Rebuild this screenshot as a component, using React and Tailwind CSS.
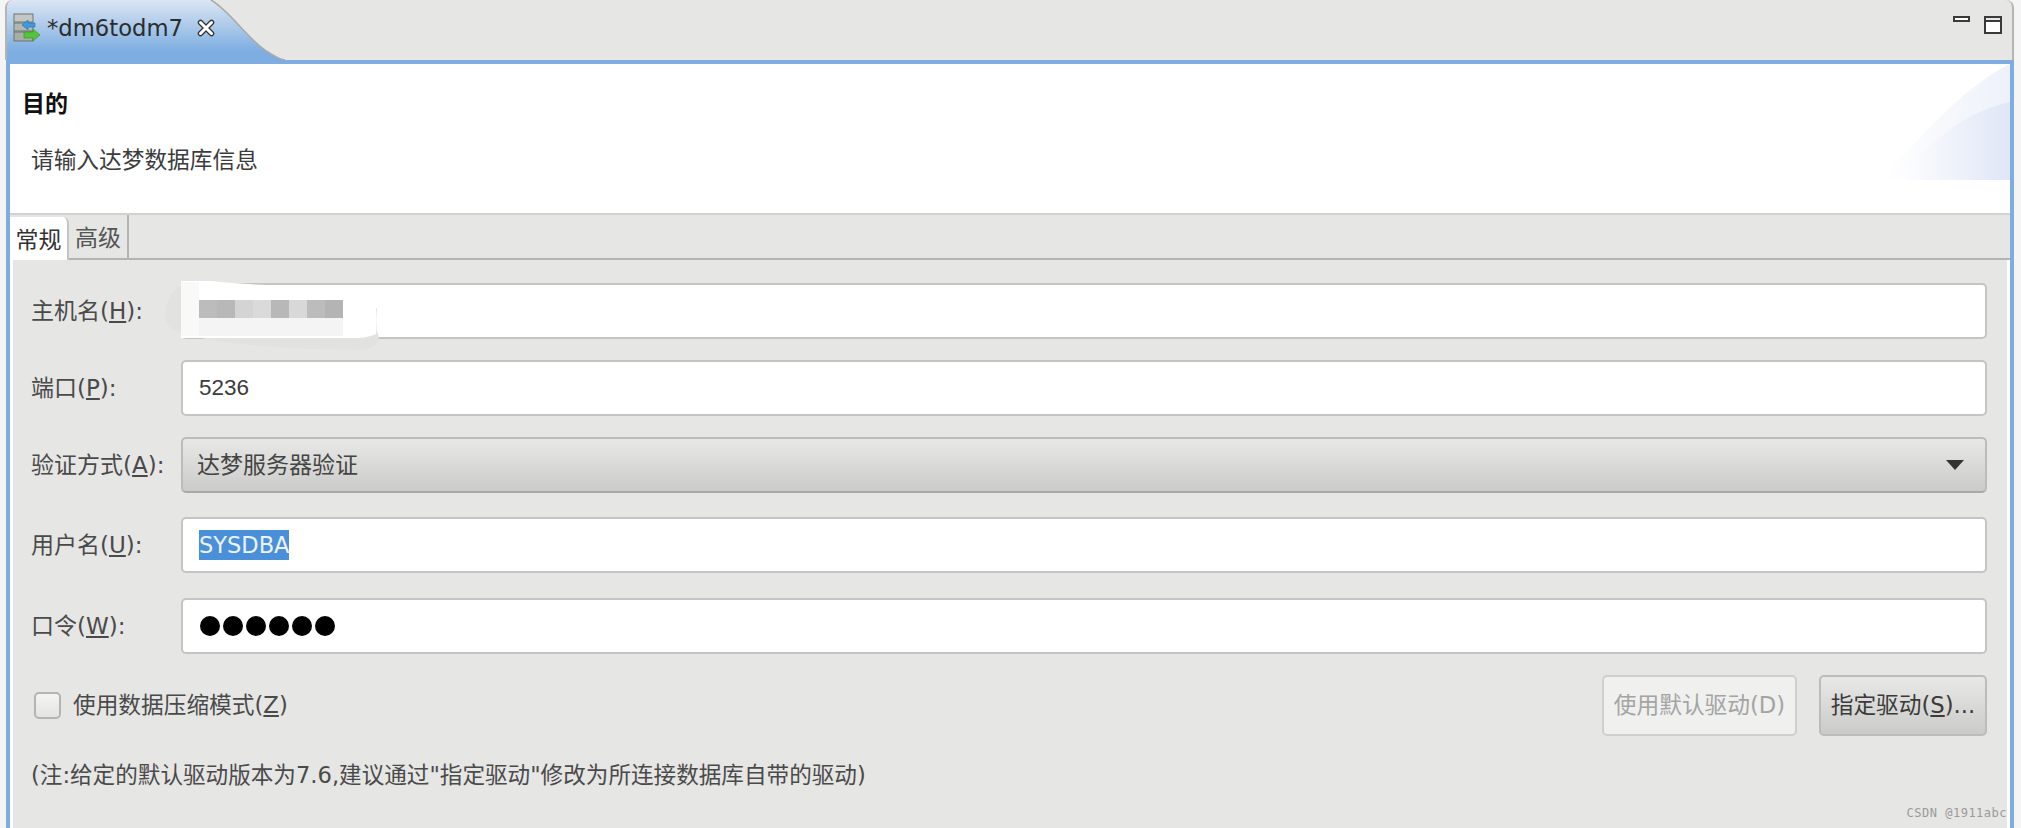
import React from "react";

const FONT = "font-['DejaVu_Sans','Noto_Sans_CJK_SC',sans-serif]";

// 带下划线的快捷键标签
const Mnemonic = ({ text, k, after = ":" }) => (
  <>
    {text}(<span className="underline underline-offset-2">{k}</span>){after}
  </>
);

const TabIcon = () => (
  <svg width="28" height="30" viewBox="0 0 28 30" className="shrink-0">
    <rect x="1" y="1" width="19" height="8" fill="#c4c8c4" stroke="#6e746e" />
    <rect x="1" y="10" width="19" height="8" fill="#b2b8b0" stroke="#6e746e" />
    <rect x="1" y="19" width="19" height="9" fill="#a8aea6" stroke="#6e746e" />
    <path d="M9 12l6-5v3h7v4h-7v3z" fill="#3f9be0" stroke="#2a6fb0" strokeWidth="0.6" />
    <path d="M27 22l-7-6v3h-9v6h9v3z" fill="#55c43c" stroke="#2f8e22" strokeWidth="0.6" />
  </svg>
);

const CloseIcon = () => (
  <svg width="18" height="18" viewBox="0 0 18 18" className="shrink-0">
    <path d="M3.5 3.5l11 11M14.5 3.5l-11 11" stroke="#333" strokeWidth="5.5" strokeLinecap="round" />
    <path d="M3.5 3.5l11 11M14.5 3.5l-11 11" stroke="#fff" strokeWidth="3" strokeLinecap="round" />
  </svg>
);

const Row = ({ className, label, children }) => (
  <div className={`flex items-center h-[56px] ${className}`}>
    <div className="w-[150px] shrink-0 text-[23px] text-[#4a4a4a] leading-none">{label}</div>
    {children}
  </div>
);

const Field = ({ children, className = "" }) => (
  <div className={`flex-1 h-full flex items-center bg-white border-2 border-[#c4c4c2] rounded-[5px] pl-[16px] text-[22.5px] text-[#3c3c3c] ${className}`}>
    {children}
  </div>
);

const App = () => (
  <div className={`w-[2021px] h-[828px] overflow-hidden flex flex-col bg-[#f5f5f5] pl-[5px] pr-[7px] ${FONT}`}>
    {/* 编辑器标签栏 */}
    <div className="relative h-[60px] shrink-0 flex justify-between bg-[#e6e6e5] border-l-2 border-r-2 border-[#b4b4b2] rounded-tl-[8px] rounded-tr-[8px]">
      <div className="relative w-[285px] h-full">
        <svg width="285" height="60" viewBox="0 0 285 60" className="absolute inset-0">
          <defs>
            <linearGradient id="tabGrad" x1="0" y1="0" x2="0" y2="1">
              <stop offset="0" stopColor="#dbe6f4" />
              <stop offset="0.85" stopColor="#7eaee1" />
            </linearGradient>
          </defs>
          <path d="M0 60V10Q0 0 10 0H204C222 10 240 38 258 50C264 54 270 59 278 60Z" fill="url(#tabGrad)" />
          <path d="M204 0C222 10 240 38 258 50C264 54 270 59 278 60" fill="none" stroke="#a9a9a7" strokeWidth="1.5" />
        </svg>
        <div className="relative flex items-center h-full pl-[6px] pb-[4px]">
          <TabIcon />
          <span className="ml-[6px] text-[22.7px] text-[#2c2c2c] leading-none">*dm6todm7</span>
          <span className="ml-[14px]"><CloseIcon /></span>
        </div>
      </div>
      <div className="flex items-start gap-[14px] pt-[16px] pr-[10px]">
        <div className="w-[17px] h-[6px] border-2 border-[#3a3a3a] bg-white" />
        <div className="w-[18px] h-[18px] border-2 border-[#3a3a3a] bg-white">
          <div className="h-[4px] bg-[#e6e6e5] border-b-2 border-[#3a3a3a]" />
        </div>
      </div>
    </div>

    {/* 蓝色外框 */}
    <div className="flex-1 min-h-0 flex flex-col border-t-4 border-x-4 border-[#7eaee1] bg-white ml-px">
      {/* 向导头部 */}
      <div className="relative h-[149px] shrink-0 bg-white">
        <svg width="130" height="116" viewBox="0 0 130 116" className="absolute top-0 right-0">
          <defs>
            <linearGradient id="bannerGrad" x1="0" y1="0" x2="1" y2="0">
              <stop offset="0" stopColor="#ffffff" />
              <stop offset="1" stopColor="#dfe6f6" />
            </linearGradient>
          </defs>
          <path d="M0 116C36 80 80 24 130 0V116Z" fill="url(#bannerGrad)" opacity="0.55" />
          <path d="M16 116C46 84 80 48 130 38V116Z" fill="url(#bannerGrad)" />
        </svg>
        <div className="relative pl-[12px] pt-[29px] text-[23px] font-bold text-[#111] leading-none">目的</div>
        <div className="relative pl-[21px] pt-[33px] text-[22.7px] text-[#3c3c3c] leading-none">请输入达梦数据库信息</div>
      </div>

      <div className="flex-1 min-h-0 flex flex-col bg-[#e6e6e5] border-t-2 border-[#d2d2d0]">
        {/* 页签 */}
        <div className="h-[45px] shrink-0 flex items-end border-b-2 border-[#b4b4b2] text-[23px] leading-none">
          <div className="relative top-[2px] w-[59px] h-[43px] pt-[4px] flex items-center justify-center bg-white border-r-2 border-[#c4c4c2] rounded-tr-[6px] text-[#333]">常规</div>
          <div className="w-[60px] h-[43px] pt-[4px] flex items-center justify-center border-r-2 border-[#b4b4b2] text-[#555]">高级</div>
        </div>

        {/* 表单 */}
        <div className="flex-1 min-h-0 flex flex-col bg-white pl-[3px] pr-[3px]">
          <div className="relative flex-1 min-h-0 flex flex-col bg-[#e6e6e5] pl-[18px] pr-[20px]">
            <Row className="mt-[23px]" label={<Mnemonic text="主机名" k="H" />}>
              <div className="relative flex-1 h-full">
                <Field className="h-full" />
                {/* 打码区域 */}
                <svg width="240" height="76" viewBox="0 0 240 76" className="absolute -left-[20px] -top-[5px]">
                  <path d="M20 8C6 14 -2 40 10 50C30 64 120 72 200 72C218 70 220 60 216 54V30H20Z" fill="#e2e2e1" />
                  <path d="M20 3H52C90 8 150 8 198 10C212 12 218 24 215 56C208 59 200 60 196 60H20Z" fill="#ffffff" />
                  <rect x="20" y="4" width="18" height="54" fill="#f9f9f9" />
                  <rect x="38" y="40" width="144" height="18" fill="#f4f4f4" />
                </svg>
                <div className="absolute left-[18px] top-[17px] flex">
                  <div className="w-[18px] h-[18px] bg-[#bcbcbc]" />
                  <div className="w-[18px] h-[18px] bg-[#b8b8b8]" />
                  <div className="w-[18px] h-[18px] bg-[#d4d4d4]" />
                  <div className="w-[18px] h-[18px] bg-[#dadada]" />
                  <div className="w-[18px] h-[18px] bg-[#b8b8b8]" />
                  <div className="w-[18px] h-[18px] bg-[#d8d8d8]" />
                  <div className="w-[18px] h-[18px] bg-[#bcbcbc]" />
                  <div className="w-[18px] h-[18px] bg-[#b4b4b4]" />
                </div>
              </div>
            </Row>
            <Row className="mt-[21px]" label={<Mnemonic text="端口" k="P" />}>
              <Field className="font-['Liberation_Sans',sans-serif] text-[#2f2f2f]">5236</Field>
            </Row>
            <Row className="mt-[21px]" label={<Mnemonic text="验证方式" k="A" />}>
              <div className="flex-1 h-full flex items-center justify-between bg-gradient-to-b from-[#e8e8e6] to-[#cbcbc9] border-2 border-[#bcbcba] border-b-[#a8a8a6] rounded-[5px] pl-[14px] pr-[21px] text-[23px] text-[#444]">
                <span>达梦服务器验证</span>
                <svg width="18" height="10" viewBox="0 0 18 10">
                  <path d="M0 0H18L9 10Z" fill="#333" />
                </svg>
              </div>
            </Row>
            <Row className="mt-[24px]" label={<Mnemonic text="用户名" k="U" />}>
              <Field>
                <span className="bg-[#4a90d9] text-[#eaf2fb] leading-[30px]">SYSDBA</span>
              </Field>
            </Row>
            <Row className="mt-[25px]" label={<Mnemonic text="口令" k="W" />}>
              <Field>
                <div className="flex gap-[3px] pl-px">
                  {[0, 1, 2, 3, 4, 5].map((i) => (
                    <span key={i} className="w-[20px] h-[20px] rounded-full bg-black" />
                  ))}
                </div>
              </Field>
            </Row>

            <div className="flex items-center h-[61px] mt-[21px]">
              <div className="ml-[3px] w-[27px] h-[27px] rounded-[5px] border-2 border-[#b4b4b2] bg-gradient-to-b from-[#f4f4f3] to-[#e4e4e3]" />
              <span className="ml-[12px] text-[22.7px] text-[#4a4a4a] leading-none">
                <Mnemonic text="使用数据压缩模式" k="Z" after="" />
              </span>
              <div className="ml-auto w-[195px] h-full flex items-center justify-center bg-[#f0f0ef] border-2 border-[#cfcfcd] rounded-[5px] text-[22.7px] text-[#a4a4a4]">
                使用默认驱动(D)
              </div>
              <div className="ml-[22px] w-[168px] h-full flex items-center justify-center bg-gradient-to-b from-[#e8e8e6] to-[#cbcbc9] border-2 border-[#bcbcba] rounded-[5px] text-[22.7px] text-[#3a3a3a] whitespace-nowrap">
                <Mnemonic text="指定驱动" k="S" after="..." />
              </div>
            </div>

            <div className="mt-[28px] text-[22.6px] text-[#4a4a4a] leading-none whitespace-nowrap">
              (注:给定的默认驱动版本为7.6,建议通过"指定驱动"修改为所连接数据库自带的驱动)
            </div>

            <div className="absolute right-0 bottom-[9px] text-[12px] leading-none tracking-[0.5px] text-[#9a9a9a] font-['DejaVu_Sans_Mono',monospace]">
              CSDN @1911abc
            </div>
          </div>
        </div>
      </div>
    </div>
  </div>
);

export default App;
